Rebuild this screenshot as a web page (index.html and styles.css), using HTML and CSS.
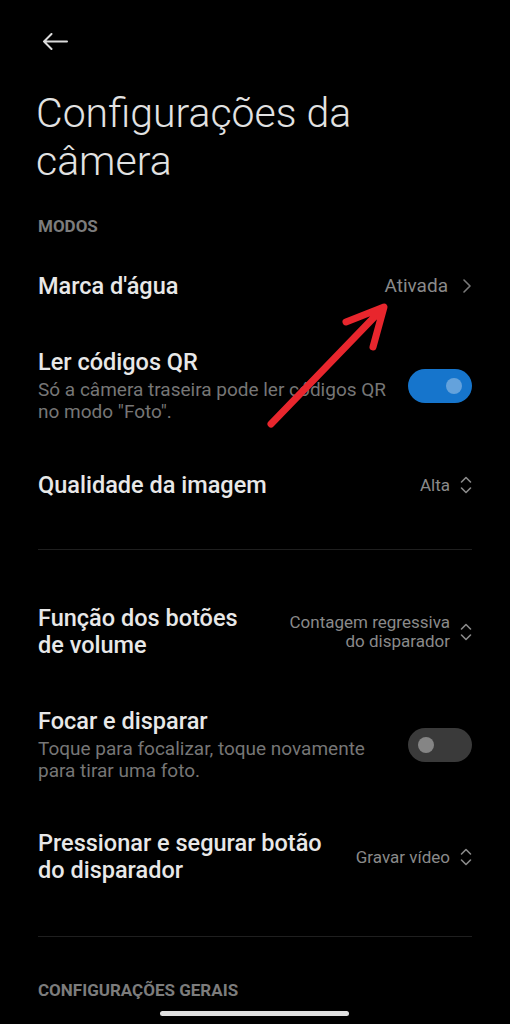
FILE: index.html
```html
<!DOCTYPE html>
<html lang="pt">
<head>
    <meta charset="UTF-8">
    <meta name="viewport" content="width=device-width, initial-scale=1.0">
    <title>Configurações da câmera</title>
    <link rel="stylesheet" href="styles.css">
</head>
<body>
    <div id="screen">
        <div class="topbar">
            <svg class="back" width="26" height="17" viewBox="0 0 26 17">
                <path d="M25 8.5 H2 M9.5 1 L2 8.5 L9.5 16" fill="none" stroke="#dcdcdc" stroke-width="2" stroke-linecap="round" stroke-linejoin="round"/>
            </svg>
        </div>

        <h1 class="page-title">Configurações da<br>câmera</h1>

        <div class="section-title">MODOS</div>

        <div class="row">
            <div class="row-text">
                <div class="row-title">Marca d'água</div>
            </div>
            <div class="row-value big">Ativada</div>
            <svg class="chevron-right" width="8" height="14" viewBox="0 0 8 14">
                <path d="M1 1 L7 7 L1 13" fill="none" stroke="#7a7a7a" stroke-width="1.6" stroke-linecap="round" stroke-linejoin="round"/>
            </svg>
        </div>

        <div class="row">
            <div class="row-text">
                <div class="row-title">Ler códigos QR</div>
                <div class="row-sub">Só a câmera traseira pode ler códigos QR<br>no modo "Foto".</div>
            </div>
            <div class="toggle on"><span class="knob"></span></div>
        </div>

        <div class="row">
            <div class="row-text">
                <div class="row-title">Qualidade da imagem</div>
            </div>
            <div class="row-value">Alta</div>
            <svg class="updown" width="12" height="20" viewBox="0 0 12 20">
                <path d="M1.5 7 L6 2.5 L10.5 7 M1.5 13 L6 17.5 L10.5 13" fill="none" stroke="#8a8a8a" stroke-width="1.6" stroke-linecap="round" stroke-linejoin="round"/>
            </svg>
        </div>

        <div class="divider"></div>

        <div class="row">
            <div class="row-text">
                <div class="row-title tall">Função dos botões<br>de volume</div>
            </div>
            <div class="row-value">Contagem regressiva<br>do disparador</div>
            <svg class="updown" width="12" height="20" viewBox="0 0 12 20">
                <path d="M1.5 7 L6 2.5 L10.5 7 M1.5 13 L6 17.5 L10.5 13" fill="none" stroke="#8a8a8a" stroke-width="1.6" stroke-linecap="round" stroke-linejoin="round"/>
            </svg>
        </div>

        <div class="row">
            <div class="row-text">
                <div class="row-title">Focar e disparar</div>
                <div class="row-sub">Toque para focalizar, toque novamente<br>para tirar uma foto.</div>
            </div>
            <div class="toggle"><span class="knob"></span></div>
        </div>

        <div class="row">
            <div class="row-text">
                <div class="row-title tall">Pressionar e segurar botão<br>do disparador</div>
            </div>
            <div class="row-value">Gravar vídeo</div>
            <svg class="updown" width="12" height="20" viewBox="0 0 12 20">
                <path d="M1.5 7 L6 2.5 L10.5 7 M1.5 13 L6 17.5 L10.5 13" fill="none" stroke="#8a8a8a" stroke-width="1.6" stroke-linecap="round" stroke-linejoin="round"/>
            </svg>
        </div>

        <div class="divider last"></div>

        <div class="section-title">CONFIGURAÇÕES GERAIS</div>

        <!-- red annotation arrow over the screenshot -->
        <svg class="annotation" width="510" height="1024" viewBox="0 0 510 1024">
            <path d="M271 424 L383 308 M346 322 L384 307 L373 347" fill="none" stroke="#e8262d" stroke-width="7" stroke-linecap="round" stroke-linejoin="round"/>
        </svg>

        <div class="home-bar"></div>
    </div>
</body>
</html>
```

FILE: styles.css
```css
body {
    margin: 0;
    padding: 0;
    background-color: #000;
    font-family: Roboto, "Noto Sans", sans-serif;
}

#screen {
    position: relative;
    width: 510px;
    height: 1024px;
    overflow: hidden;
    background-color: #000;
}

.topbar {
    padding: 33px 0 0 42px;
    height: 17px;
}

.back {
    display: block;
}

.page-title {
    margin: 39px 0 19px;
    padding: 0 36px;
    font-size: 41px;
    font-weight: 300;
    line-height: 48px;
    color: #e2e2e2;
}

.section-title {
    padding: 12px 38px;
    font-size: 17px;
    font-weight: 700;
    line-height: 20px;
    color: #7c7c7c;
}

.row {
    display: flex;
    align-items: center;
    padding: 24px 38px;
}

.row-text {
    flex: 1;
    min-width: 0;
}

.row-title {
    font-size: 23.5px;
    font-weight: 500;
    line-height: 28px;
    color: #e8e8e8;
}

.row-title.tall {
    line-height: 27px;
}

.row-sub {
    margin-top: 3px;
    font-size: 19px;
    line-height: 22px;
    color: #767676;
}

.row-value {
    font-size: 17px;
    line-height: 19px;
    color: #8a8a8a;
    text-align: right;
}

.row-value.big {
    font-size: 19px;
    line-height: 22px;
}

.chevron-right {
    margin: 0 1px 0 15px;
    flex-shrink: 0;
}

.updown {
    margin-left: 10px;
    flex-shrink: 0;
}

.toggle {
    position: relative;
    width: 64px;
    height: 34px;
    border-radius: 17px;
    background-color: #3a3a3a;
    flex-shrink: 0;
}

.toggle .knob {
    position: absolute;
    top: 9px;
    left: 10px;
    width: 16px;
    height: 16px;
    border-radius: 50%;
    background-color: #858585;
}

.toggle.on {
    background-color: #1675cc;
}

.toggle.on .knob {
    left: 38px;
    background-color: #64a2dc;
}

.divider {
    height: 1px;
    margin: 26px 38px 31px;
    background-color: #1f1f1f;
}

.divider.last {
    margin-top: 28px;
}

.annotation {
    position: absolute;
    top: 0;
    left: 0;
    pointer-events: none;
}

.home-bar {
    position: absolute;
    left: 160px;
    top: 1011px;
    width: 189px;
    height: 5px;
    border-radius: 3px;
    background-color: #e0e0e0;
}
```
